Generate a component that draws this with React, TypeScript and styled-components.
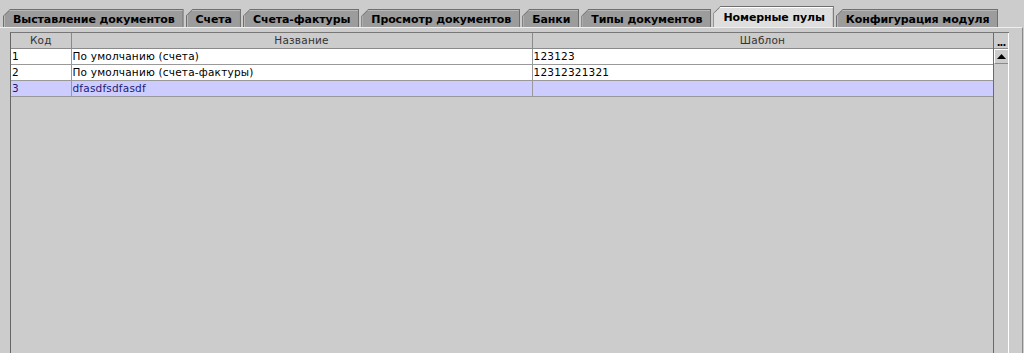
import React from 'react';
import styled, { createGlobalStyle } from 'styled-components';

const GlobalStyle = createGlobalStyle`
  html, body {
    margin: 0;
    padding: 0;
    background: #cccccc;
  }
  body {
    font-family: "DejaVu Sans", "Liberation Sans", sans-serif;
  }
`;

const Window = styled.div`
  width: 1024px;
  height: 353px;
  background: #cccccc;
  display: flex;
  flex-direction: column;
  overflow: hidden;
`;

const TabStrip = styled.div`
  display: flex;
  align-items: flex-end;
  gap: 2px;
  height: 27px;
  padding-left: 3px;
  box-sizing: border-box;
`;

const TabOuter = styled.div<{ $active?: boolean }>`
  height: ${(p) => (p.$active ? 21 : 18)}px;
  padding: 1px 1px 0 1px;
  box-sizing: border-box;
  background: #6f6f6f;
  clip-path: polygon(7px 0, 100% 0, 100% 100%, 0 100%, 0 7px);
  display: flex;
`;

const TabInner = styled.div<{ $active?: boolean }>`
  flex: 1;
  display: flex;
  align-items: center;
  padding: 0 8px 0 8px;
  background: ${(p) => (p.$active ? '#dedede' : '#9c9c9c')};
  border-top: 1px solid ${(p) => (p.$active ? '#ffffff' : '#b8b8b8')};
  border-left: 1px solid ${(p) => (p.$active ? '#ffffff' : '#b8b8b8')};
  clip-path: polygon(6px 0, 100% 0, 100% 100%, 0 100%, 0 6px);
  font-size: 11px;
  font-weight: bold;
  color: #000;
  white-space: nowrap;
  letter-spacing: -0.1px;
`;

const Content = styled.div`
  flex: 1;
  display: flex;
  min-height: 0;
  border-top: 1px solid #eeeeee;
  border-right: 1px solid #8a8a8a;
  margin-right: 1px;
  padding: 4px 0 0 10px;
`;

const ScrollPane = styled.div`
  display: flex;
  border-left: 1px solid #666666;
  border-top: 1px solid #777777;
`;

const Viewport = styled.div`
  width: 982px;
  background: #cccccc;
`;

const Grid = styled.table`
  border-collapse: collapse;
  table-layout: fixed;
  width: 982px;
  font-size: 10.5px;
  letter-spacing: 0.2px;
`;

const HeadCell = styled.th<{ $w: number }>`
  width: ${(p) => p.$w}px;
  height: 15px;
  padding: 0;
  box-sizing: border-box;
  font-weight: normal;
  color: #333333;
  text-align: center;
  background: #cccccc;
  border-right: 1px solid #8a8a8a;
  border-bottom: 1px solid #8a8a8a;
  line-height: 14px;
`;

const Row = styled.tr<{ $selected?: boolean }>`
  background: ${(p) => (p.$selected ? '#ccccff' : '#ffffff')};
  color: ${(p) => (p.$selected ? '#1c1c78' : '#000000')};
`;

const Cell = styled.td`
  height: 16px;
  padding: 0 0 0 1px;
  box-sizing: border-box;
  border-right: 1px solid #999999;
  border-bottom: 1px solid #999999;
  white-space: nowrap;
  overflow: hidden;
  line-height: 15px;
`;

const ScrollColumn = styled.div`
  width: 16px;
  display: flex;
  flex-direction: column;
  border-left: 1px solid #6a6a6a;
  border-right: 1px solid #ffffff;
  box-sizing: border-box;
`;

const CornerButton = styled.div`
  height: 15px;
  display: flex;
  align-items: flex-end;
  justify-content: center;
  font-size: 10px;
  font-weight: bold;
  line-height: 10px;
  color: #000;
  border-bottom: 1px solid #8a8a8a;
  letter-spacing: -1px;
`;

const Track = styled.div`
  flex: 1;
  display: flex;
  flex-direction: column;
  background: #cccccc;
`;

const ArrowButton = styled.div`
  height: 15px;
  display: flex;
  align-items: center;
  justify-content: center;
  border-top: 1px solid #ffffff;
  border-left: 1px solid #ffffff;
  border-bottom: 1px solid #8a8a8a;
  box-sizing: border-box;
`;

const tabs = [
  'Выставление документов',
  'Счета',
  'Счета-фактуры',
  'Просмотр документов',
  'Банки',
  'Типы документов',
  'Номерные пулы',
  'Конфигурация модуля',
];

const columns = [
  { title: 'Код', width: 60 },
  { title: 'Название', width: 461 },
  { title: 'Шаблон', width: 461 },
];

const rows = [
  { code: '1', name: 'По умолчанию (счета)', tpl: '123123' },
  { code: '2', name: 'По умолчанию (счета-фактуры)', tpl: '12312321321' },
  { code: '3', name: 'dfasdfsdfasdf', tpl: '', selected: true },
];

function App() {
  return (
    <Window>
      <GlobalStyle />
      <TabStrip>
        {tabs.map((t) => (
          <TabOuter key={t} $active={t === 'Номерные пулы'}>
            <TabInner $active={t === 'Номерные пулы'}>{t}</TabInner>
          </TabOuter>
        ))}
      </TabStrip>

      <Content>
        <ScrollPane>
          <Viewport>
            <Grid>
              <thead>
                <tr>
                  {columns.map((c) => (
                    <HeadCell key={c.title} $w={c.width}>{c.title}</HeadCell>
                  ))}
                </tr>
              </thead>
              <tbody>
                {rows.map((r) => (
                  <Row key={r.code} $selected={r.selected}>
                    <Cell>{r.code}</Cell>
                    <Cell>{r.name}</Cell>
                    <Cell>{r.tpl}</Cell>
                  </Row>
                ))}
              </tbody>
            </Grid>
          </Viewport>
          <ScrollColumn>
            <CornerButton>...</CornerButton>
            <Track>
              <ArrowButton>
                <svg width="9" height="5" viewBox="0 0 9 5">
                  <polygon points="4.5,0 9,5 0,5" fill="#000" />
                </svg>
              </ArrowButton>
            </Track>
          </ScrollColumn>
        </ScrollPane>
      </Content>
    </Window>
  );
}

export default App;
